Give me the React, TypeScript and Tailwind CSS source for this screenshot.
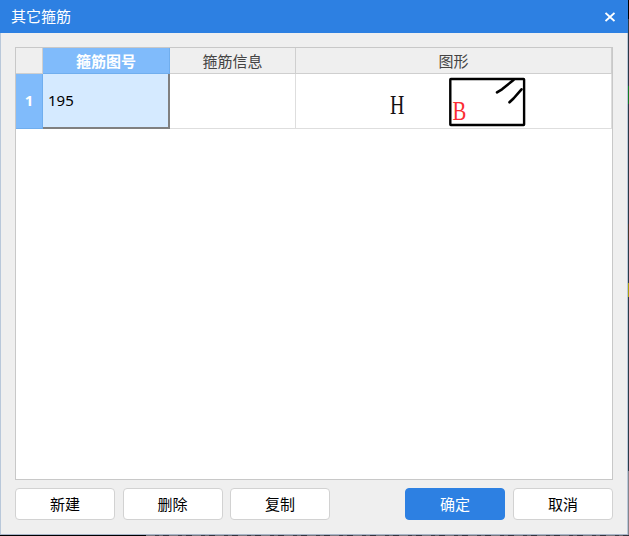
import { clsx } from "clsx";

const COLUMNS = [
  { key: "code", label: "箍筋图号", active: true },
  { key: "info", label: "箍筋信息", active: false },
  { key: "shape", label: "图形", active: false },
];

const GRID = "grid grid-cols-[27px_127px_126px_316px]";

// Slivers of the drawing window that stay visible around the dialog.
const RIGHT_EDGE = [
  "h-[19px] bg-black",
  "h-[67px] bg-[#2b3945]",
  "h-[18px] bg-[#117a22]",
  "h-[120px] bg-[#2b3945]",
  "h-[16px] bg-[#44382c]",
  "h-[43px] bg-[#2b3c48]",
  "h-[14px] bg-[#a8a10c]",
  "h-[174px] bg-[#2b3c48]",
  "h-[64px] bg-[#85858a]",
];

/** Closed rectangular stirrup with its two hooks; B is the editable side. */
function StirrupShape() {
  return (
    <svg width="315" height="54" viewBox="296 74 315 54" className="block" aria-label="195">
      <rect x="450.3" y="79" width="73.8" height="46" rx="0.5" fill="none" stroke="#000" strokeWidth="2.4" />
      <path
        d="M497 92.3 L502 89.3 L513.5 80 M509.5 102.3 L513.5 98.5 L521.5 89.3"
        fill="none"
        stroke="#000"
        strokeWidth="2.6"
        strokeLinecap="round"
        strokeLinejoin="round"
      />
      <g fontFamily="'Liberation Serif', serif" fontSize="28">
        <text transform="translate(390 113.5) scale(0.71 1)" fill="#111">
          H
        </text>
        <text transform="translate(452.6 120) scale(0.74 1)" fill="#fb2d33">
          B
        </text>
      </g>
    </svg>
  );
}

function DialogButton({ label, primary = false }: { label: string; primary?: boolean }) {
  return (
    <button
      type="button"
      className={clsx(
        "h-8 w-[100px] rounded border text-[15px] leading-none",
        primary ? "border-[#2d80e2] bg-[#2d80e2] text-white" : "border-[#d2d2d2] bg-white text-black",
      )}
    >
      {label}
    </button>
  );
}

export default function App() {
  return (
    <div className="h-[536px] w-[629px] overflow-hidden font-['Noto_Sans','Noto_Sans_CJK_SC',sans-serif] text-[15px]">
      <div className="flex h-[535px]">
        <div className="flex w-[628px] flex-col border-b border-[#a9b5c8] bg-[#efefef]">
          <header className="flex h-[33px] shrink-0 items-center justify-between bg-[#2d80e2] pr-[13px] pl-[11px] text-white">
            <h1 className="text-[15px] leading-none">其它箍筋</h1>
            <svg width="10" height="10" viewBox="0 0 10 10" stroke="#fff" strokeWidth="1.9" aria-label="关闭">
              <path d="M0.5 1 L9.5 9 M9.5 1 L0.5 9" />
            </svg>
          </header>

          <main className="flex flex-1 flex-col border-x border-[#b9c8da] p-3.5">
            <div className="h-[433px] w-[598px] border border-[#c8c8c8] bg-white">
              <div className={clsx(GRID, "h-[26px] bg-[#efefef] text-[#444]")}>
                <div className="border-r border-b border-[#cfcfcf]" />
                {COLUMNS.map(({ key, label, active }) => (
                  <div
                    key={key}
                    className={clsx(
                      "flex items-center justify-center border-r border-b pt-0.5 leading-none",
                      active ? "border-[#70aeee] bg-[#80bbfb] font-bold text-white" : "border-[#cfcfcf]",
                    )}
                  >
                    {label}
                  </div>
                ))}
              </div>

              <div className={clsx(GRID, "h-[55px]")}>
                <div className="flex items-center justify-center border-r border-b border-[#70aeee] bg-[#80bbfb] pb-0.5 font-bold text-white">
                  1
                </div>
                <div className="flex items-center border-r-2 border-b-2 border-[#808080] bg-[#d5eaff] pb-px pl-[5px] text-black">
                  195
                </div>
                <div className="border-r border-b border-[#dedede]" />
                <div className="border-r border-b border-[#dedede]">
                  <StirrupShape />
                </div>
              </div>
            </div>

            <footer className="mt-2 flex w-[598px] justify-between">
              <div className="flex gap-[7.5px]">
                <DialogButton label="新建" />
                <DialogButton label="删除" />
                <DialogButton label="复制" />
              </div>
              <div className="flex gap-2">
                <DialogButton label="确定" primary />
                <DialogButton label="取消" />
              </div>
            </footer>
          </main>
        </div>
        <div className="flex w-px flex-col" aria-hidden>
          {RIGHT_EDGE.map((segment) => (
            <div key={segment} className={segment} />
          ))}
        </div>
      </div>
      <div className="flex h-px" aria-hidden>
        <div className="w-[146px] bg-black" />
        <div className="flex-1 bg-[repeating-linear-gradient(90deg,#77777d_0_9px,#3c3c44_9px_13px,#6a6a70_13px_17px,#34343c_17px_23px)]" />
      </div>
    </div>
  );
}
